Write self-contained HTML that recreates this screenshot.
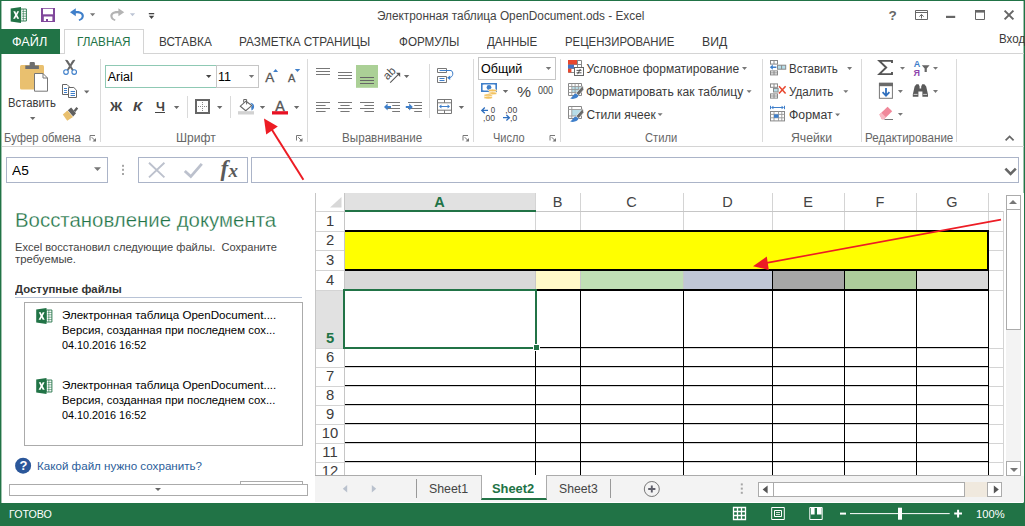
<!DOCTYPE html>
<html lang="ru"><head><meta charset="utf-8"><title>Excel</title>
<style>
html,body{margin:0;padding:0}
body{width:1025px;height:526px;position:relative;overflow:hidden;background:#fff;font-family:"Liberation Sans",sans-serif;font-size:12px;color:#444}
.a{position:absolute}
.t{position:absolute;white-space:nowrap;line-height:1;transform-origin:0 0}
svg{position:absolute;overflow:visible}
.vs{position:absolute;width:1px;background:#dadada}
.dd{position:absolute;width:0;height:0;border-left:3px solid transparent;border-right:3px solid transparent;border-top:3px solid #666}
.rh{position:absolute;left:316px;width:28px;text-align:center;font-size:14.8px;color:#3c3c3c;line-height:1}
</style></head><body>

<div class="a" style="left:0;top:0;width:1025px;height:1px;background:#217346"></div>
<div class="a" style="left:0;top:0;width:1px;height:526px;background:#217346"></div>
<div class="a" style="left:1px;top:1px;width:1px;height:526px;background:#9fc3ae"></div>
<div class="a" style="left:1023px;top:1px;width:1px;height:526px;background:#9fc3ae"></div>
<div class="a" style="left:1024px;top:0;width:1px;height:526px;background:#217346"></div>
<span class="t" style="left:377.4px;top:10.0px;font-size:12.5px;color:#444;transform:scaleX(0.945);">Электронная таблица OpenDocument.ods - Excel</span>
<div class="a" style="left:2px;top:53px;width:1022px;height:1px;background:#d4d4d4"></div>
<div class="a" style="left:0;top:29px;width:60px;height:25px;background:#217346"></div>
<div class="a" style="left:64px;top:29px;width:78px;height:24px;background:#fff;border:1px solid #d4d4d4;border-bottom:none;box-sizing:content-box"></div>
<span class="t" style="left:12.4px;top:36.0px;font-size:12.5px;color:#fff;transform:scaleX(1.014);">ФАЙЛ</span>
<span class="t" style="left:76.7px;top:36.0px;font-size:12.5px;color:#217346;transform:scaleX(0.934);">ГЛАВНАЯ</span>
<span class="t" style="left:158.6px;top:36.0px;font-size:12.5px;color:#3a3a3a;transform:scaleX(0.941);">ВСТАВКА</span>
<span class="t" style="left:239.0px;top:36.0px;font-size:12.5px;color:#3a3a3a;transform:scaleX(0.943);">РАЗМЕТКА СТРАНИЦЫ</span>
<span class="t" style="left:398.9px;top:36.0px;font-size:12.5px;color:#3a3a3a;transform:scaleX(0.934);">ФОРМУЛЫ</span>
<span class="t" style="left:487.4px;top:36.0px;font-size:12.5px;color:#3a3a3a;transform:scaleX(0.926);">ДАННЫЕ</span>
<span class="t" style="left:565.4px;top:36.0px;font-size:12.5px;color:#3a3a3a;transform:scaleX(0.909);">РЕЦЕНЗИРОВАНИЕ</span>
<span class="t" style="left:702.4px;top:36.0px;font-size:12.5px;color:#3a3a3a;transform:scaleX(0.979);">ВИД</span>
<span class="t" style="left:999.1px;top:33.0px;font-size:12.5px;color:#3a3a3a;transform:scaleX(0.925);">Вход</span>
<div class="a" style="left:2px;top:146px;width:1022px;height:1px;background:#d4d4d4"></div>
<div class="vs" style="left:100px;top:59px;height:83px"></div>
<div class="vs" style="left:307px;top:59px;height:83px"></div>
<div class="vs" style="left:473px;top:59px;height:83px"></div>
<div class="vs" style="left:560px;top:59px;height:83px"></div>
<div class="vs" style="left:762px;top:59px;height:83px"></div>
<div class="vs" style="left:861px;top:59px;height:83px"></div>
<div class="vs" style="left:956px;top:59px;height:83px"></div>
<div class="vs" style="left:187px;top:96px;height:22px"></div>
<div class="vs" style="left:230px;top:96px;height:22px"></div>
<div class="vs" style="left:429px;top:64px;height:54px"></div>
<span class="t" style="left:4.4px;top:132.1px;font-size:12px;color:#666;transform:scaleX(0.941);">Буфер обмена</span>
<span class="t" style="left:175.9px;top:132.1px;font-size:12px;color:#666;transform:scaleX(1.005);">Шрифт</span>
<span class="t" style="left:342.4px;top:132.1px;font-size:12px;color:#666;transform:scaleX(0.971);">Выравнивание</span>
<span class="t" style="left:493.4px;top:132.1px;font-size:12px;color:#666;transform:scaleX(0.918);">Число</span>
<span class="t" style="left:645.2px;top:132.1px;font-size:12px;color:#666;transform:scaleX(0.931);">Стили</span>
<span class="t" style="left:791.2px;top:132.1px;font-size:12px;color:#666;transform:scaleX(1.019);">Ячейки</span>
<span class="t" style="left:864.9px;top:132.1px;font-size:12px;color:#666;transform:scaleX(0.966);">Редактирование</span>
<span class="t" style="left:8.2px;top:97.2px;font-size:12px;color:#3a3a3a;transform:scaleX(0.942);">Вставить</span>
<div class="a" style="left:105px;top:65px;width:110px;height:21px;border:1px solid #8fc9b4;background:#fff"></div>
<div class="a" style="left:216px;top:65px;width:41px;height:21px;border:1px solid #c6c6c6;background:#fff"></div>
<span class="t" style="left:107.7px;top:71.0px;font-size:12.5px;color:#000;">Arial</span>
<span class="t" style="left:218.0px;top:71.0px;font-size:12.5px;color:#000;transform:scaleX(1.005);">11</span>
<span class="t" style="left:109.8px;top:100.7px;font-size:12.5px;color:#444;font-weight:bold;transform:scaleX(1.083);">Ж</span>
<span class="t" style="left:133.0px;top:100.7px;font-size:12.5px;color:#444;font-weight:bold;font-style:italic;transform:scaleX(1.177);">К</span>
<span class="t" style="left:155.7px;top:100.7px;font-size:12.5px;color:#444;font-weight:bold;transform:scaleX(1.017);">Ч</span>
<div class="a" style="left:155px;top:112px;width:10px;height:1px;background:#444"></div>
<div class="a" style="left:478px;top:57px;width:76px;height:21px;border:1px solid #c6c6c6;background:#fff"></div>
<span class="t" style="left:481.1px;top:63.0px;font-size:12.5px;color:#000;transform:scaleX(1.005);">Общий</span>
<span class="t" style="left:516.6px;top:84.5px;font-size:14px;color:#444;transform:scaleX(1.124);">%</span>
<span class="t" style="left:537.5px;top:85.8px;font-size:10px;color:#444;transform:scaleX(0.899);">000</span>
<span class="t" style="left:586.4px;top:62.8px;font-size:12px;color:#3a3a3a;">Условное форматирование</span>
<span class="t" style="left:586.4px;top:86.0px;font-size:12px;color:#3a3a3a;transform:scaleX(1.007);">Форматировать как таблицу</span>
<span class="t" style="left:586.4px;top:109.0px;font-size:12px;color:#3a3a3a;">Стили ячеек</span>
<span class="t" style="left:788.6px;top:63.0px;font-size:12px;color:#3a3a3a;transform:scaleX(0.959);">Вставить</span>
<span class="t" style="left:788.6px;top:85.5px;font-size:12px;color:#3a3a3a;transform:scaleX(0.969);">Удалить</span>
<span class="t" style="left:788.6px;top:108.8px;font-size:12px;color:#3a3a3a;transform:scaleX(1.022);">Формат</span>
<div class="a" style="left:6px;top:157px;width:100px;height:24px;border:1px solid #abb4c8;background:#fff"></div>
<span class="t" style="left:12.4px;top:165.0px;font-size:12.5px;color:#000;transform:scaleX(1.095);">A5</span>
<div class="a" style="left:138px;top:157px;width:108px;height:24px;border:1px solid #abb4c8;background:#fff"></div>
<div class="a" style="left:251px;top:157px;width:766px;height:24px;border:1px solid #abb4c8;background:#fff"></div>
<span class="t" style="left:220.5px;top:157.1px;font-size:23px;color:#5a5a5a;font-weight:bold;font-style:italic;font-family:'Liberation Serif',serif;">f</span>
<span class="t" style="left:228.4px;top:161.2px;font-size:19px;color:#5a5a5a;font-weight:bold;font-style:italic;font-family:'Liberation Serif',serif;">x</span>
<span class="t" style="left:14.6px;top:210.1px;font-size:20px;color:#217346;transform:scaleX(1.020);-webkit-text-stroke:0.3px #fff;">Восстановление документа</span>
<span class="t" style="left:15.0px;top:241.9px;font-size:11px;color:#444;transform:scaleX(1.009);">Excel восстановил следующие файлы.&nbsp; Сохраните</span>
<span class="t" style="left:15.0px;top:254.4px;font-size:11px;color:#444;transform:scaleX(1.028);">требуемые.</span>
<span class="t" style="left:15.0px;top:283.5px;font-size:11.5px;color:#333;font-weight:bold;transform:scaleX(0.988);">Доступные файлы</span>
<div class="a" style="left:15px;top:297px;width:287px;height:1px;background:#b8c3d6"></div>
<div class="a" style="left:24px;top:302px;width:277px;height:142px;border:1px solid #ababab;background:#fff"></div>
<span class="t" style="left:61.9px;top:310.1px;font-size:11px;color:#000;transform:scaleX(1.052);">Электронная таблица OpenDocument....</span>
<span class="t" style="left:61.9px;top:325.1px;font-size:11px;color:#000;transform:scaleX(1.035);">Версия, созданная при последнем сох...</span>
<span class="t" style="left:61.9px;top:340.1px;font-size:11px;color:#000;transform:scaleX(0.983);">04.10.2016 16:52</span>
<span class="t" style="left:61.9px;top:380.1px;font-size:11px;color:#000;transform:scaleX(1.052);">Электронная таблица OpenDocument....</span>
<span class="t" style="left:61.9px;top:395.1px;font-size:11px;color:#000;transform:scaleX(1.035);">Версия, созданная при последнем сох...</span>
<span class="t" style="left:61.9px;top:410.1px;font-size:11px;color:#000;transform:scaleX(0.983);">04.10.2016 16:52</span>
<span class="t" style="left:36.9px;top:460.8px;font-size:11.5px;color:#2a5d9a;transform:scaleX(1.010);">Какой файл нужно сохранить?</span>
<div class="a" style="left:315px;top:193px;width:1px;height:283px;background:#c6c6c6"></div>
<div class="a" style="left:345px;top:211px;width:658px;height:1px;background:#d4d4d4"></div>
<div class="a" style="left:345px;top:231px;width:658px;height:1px;background:#d4d4d4"></div>
<div class="a" style="left:345px;top:250px;width:658px;height:1px;background:#d4d4d4"></div>
<div class="a" style="left:345px;top:270px;width:658px;height:1px;background:#d4d4d4"></div>
<div class="a" style="left:345px;top:290px;width:658px;height:1px;background:#d4d4d4"></div>
<div class="a" style="left:345px;top:348px;width:658px;height:1px;background:#d4d4d4"></div>
<div class="a" style="left:345px;top:367px;width:658px;height:1px;background:#d4d4d4"></div>
<div class="a" style="left:345px;top:386px;width:658px;height:1px;background:#d4d4d4"></div>
<div class="a" style="left:345px;top:405px;width:658px;height:1px;background:#d4d4d4"></div>
<div class="a" style="left:345px;top:424px;width:658px;height:1px;background:#d4d4d4"></div>
<div class="a" style="left:345px;top:443px;width:658px;height:1px;background:#d4d4d4"></div>
<div class="a" style="left:345px;top:462px;width:658px;height:1px;background:#d4d4d4"></div>
<div class="a" style="left:535px;top:193px;width:1px;height:283px;background:#d4d4d4"></div>
<div class="a" style="left:580px;top:193px;width:1px;height:283px;background:#d4d4d4"></div>
<div class="a" style="left:683px;top:193px;width:1px;height:283px;background:#d4d4d4"></div>
<div class="a" style="left:772px;top:193px;width:1px;height:283px;background:#d4d4d4"></div>
<div class="a" style="left:844px;top:193px;width:1px;height:283px;background:#d4d4d4"></div>
<div class="a" style="left:916px;top:193px;width:1px;height:283px;background:#d4d4d4"></div>
<div class="a" style="left:988px;top:193px;width:1px;height:283px;background:#d4d4d4"></div>
<div class="a" style="left:1003px;top:211px;width:1px;height:265px;background:#d4d4d4"></div>
<div class="a" style="left:345px;top:193px;width:190px;height:17px;background:#e1e1e1"></div>
<div class="a" style="left:344px;top:211px;width:659px;height:1px;background:#c6c6c6"></div>
<div class="a" style="left:344px;top:210px;width:192px;height:2px;background:#217346"></div>
<svg style="left:330px;top:197px" width="12" height="11"><path d="M11.5 0V10.5H0Z" fill="#d8d8d8"/></svg>
<div class="a" style="left:419.5px;top:195.3px;width:40px;text-align:center;font-size:14.5px;line-height:1;color:#217346;font-weight:bold;">A</div>
<div class="a" style="left:537.5px;top:195.3px;width:40px;text-align:center;font-size:14.5px;line-height:1;color:#444;">B</div>
<div class="a" style="left:611.5px;top:195.3px;width:40px;text-align:center;font-size:14.5px;line-height:1;color:#444;">C</div>
<div class="a" style="left:707.5px;top:195.3px;width:40px;text-align:center;font-size:14.5px;line-height:1;color:#444;">D</div>
<div class="a" style="left:788px;top:195.3px;width:40px;text-align:center;font-size:14.5px;line-height:1;color:#444;">E</div>
<div class="a" style="left:860px;top:195.3px;width:40px;text-align:center;font-size:14.5px;line-height:1;color:#444;">F</div>
<div class="a" style="left:932px;top:195.3px;width:40px;text-align:center;font-size:14.5px;line-height:1;color:#444;">G</div>
<div class="a" style="left:316px;top:290px;width:28px;height:58px;background:#e1e1e1"></div>
<div class="a" style="left:344px;top:193px;width:1px;height:283px;background:#c6c6c6"></div>
<div class="a" style="left:316px;top:211px;width:28px;height:1px;background:#d4d4d4"></div>
<div class="a" style="left:316px;top:231px;width:28px;height:1px;background:#d4d4d4"></div>
<div class="a" style="left:316px;top:250px;width:28px;height:1px;background:#d4d4d4"></div>
<div class="a" style="left:316px;top:270px;width:28px;height:1px;background:#d4d4d4"></div>
<div class="a" style="left:316px;top:290px;width:28px;height:1px;background:#d4d4d4"></div>
<div class="a" style="left:316px;top:348px;width:28px;height:1px;background:#d4d4d4"></div>
<div class="a" style="left:316px;top:367px;width:28px;height:1px;background:#d4d4d4"></div>
<div class="a" style="left:316px;top:386px;width:28px;height:1px;background:#d4d4d4"></div>
<div class="a" style="left:316px;top:405px;width:28px;height:1px;background:#d4d4d4"></div>
<div class="a" style="left:316px;top:424px;width:28px;height:1px;background:#d4d4d4"></div>
<div class="a" style="left:316px;top:443px;width:28px;height:1px;background:#d4d4d4"></div>
<div class="a" style="left:316px;top:462px;width:28px;height:1px;background:#d4d4d4"></div>
<div class="rh" style="top:214px">1</div>
<div class="rh" style="top:233px">2</div>
<div class="rh" style="top:253px">3</div>
<div class="rh" style="top:273px">4</div>
<div class="rh" style="top:330.7px;color:#217346;font-weight:bold">5</div>
<div class="rh" style="top:350px">6</div>
<div class="rh" style="top:369px">7</div>
<div class="rh" style="top:388px">8</div>
<div class="rh" style="top:407px">9</div>
<div class="rh" style="top:426px">10</div>
<div class="rh" style="top:445px">11</div>
<div class="rh" style="top:464px">12</div>
<div class="a" style="left:345px;top:231px;width:643px;height:39px;background:#ffff00"></div>
<div class="a" style="left:345px;top:230px;width:644px;height:2px;background:#000"></div>
<div class="a" style="left:345px;top:269px;width:644px;height:2px;background:#000"></div>
<div class="a" style="left:987px;top:230px;width:2px;height:61px;background:#000"></div>
<div class="a" style="left:345px;top:271px;width:190px;height:18px;background:#d9d9d9"></div>
<div class="a" style="left:536px;top:271px;width:44px;height:18px;background:#fffac8"></div>
<div class="a" style="left:535px;top:271px;width:1px;height:18px;background:#c8c8c8"></div>
<div class="a" style="left:581px;top:271px;width:102px;height:18px;background:#c0dfb5"></div>
<div class="a" style="left:580px;top:271px;width:1px;height:18px;background:#c8c8c8"></div>
<div class="a" style="left:684px;top:271px;width:88px;height:18px;background:#c0c7d6"></div>
<div class="a" style="left:683px;top:271px;width:1px;height:18px;background:#c8c8c8"></div>
<div class="a" style="left:773px;top:271px;width:71px;height:18px;background:#a6a6a6"></div>
<div class="a" style="left:772px;top:271px;width:1px;height:18px;background:#000"></div>
<div class="a" style="left:845px;top:271px;width:71px;height:18px;background:#accc9b"></div>
<div class="a" style="left:844px;top:271px;width:1px;height:18px;background:#000"></div>
<div class="a" style="left:917px;top:271px;width:71px;height:18px;background:#d9d9d9"></div>
<div class="a" style="left:916px;top:271px;width:1px;height:18px;background:#000"></div>
<div class="a" style="left:345px;top:289px;width:644px;height:2px;background:#000"></div>
<div class="a" style="left:535px;top:290px;width:1px;height:186px;background:#000"></div>
<div class="a" style="left:580px;top:290px;width:1px;height:186px;background:#000"></div>
<div class="a" style="left:683px;top:290px;width:1px;height:186px;background:#000"></div>
<div class="a" style="left:772px;top:290px;width:1px;height:186px;background:#000"></div>
<div class="a" style="left:844px;top:290px;width:1px;height:186px;background:#000"></div>
<div class="a" style="left:916px;top:290px;width:1px;height:186px;background:#000"></div>
<div class="a" style="left:988px;top:290px;width:1px;height:186px;background:#000"></div>
<div class="a" style="left:345px;top:347px;width:643px;height:1px;background:#000"></div>
<div class="a" style="left:345px;top:366px;width:643px;height:1px;background:#000"></div>
<div class="a" style="left:345px;top:385px;width:643px;height:1px;background:#000"></div>
<div class="a" style="left:345px;top:404px;width:643px;height:1px;background:#000"></div>
<div class="a" style="left:345px;top:423px;width:643px;height:1px;background:#000"></div>
<div class="a" style="left:345px;top:442px;width:643px;height:1px;background:#000"></div>
<div class="a" style="left:345px;top:461px;width:643px;height:1px;background:#000"></div>
<div class="a" style="left:343px;top:289px;width:190px;height:56px;border:2px solid #217346;background:#fff"></div>
<div class="a" style="left:533px;top:344px;width:5px;height:5px;background:#217346;border:1px solid #fff"></div>
<div class="a" style="left:1004px;top:193px;width:20px;height:283px;background:#fff"></div>
<div class="a" style="left:1006px;top:195px;width:15px;height:281px;background:#f3f3f3"></div>
<div class="a" style="left:1006px;top:195px;width:13px;height:13px;border:1px solid #ababab;background:#fff"></div>
<div class="a" style="left:1006px;top:209px;width:13px;height:119px;border:1px solid #ababab;background:#fff"></div>
<div class="a" style="left:1006px;top:461px;width:13px;height:13px;border:1px solid #ababab;background:#fff"></div>
<div class="a" style="left:1009px;top:200px;width:0;height:0;border-left:4.4px solid transparent;border-right:4.4px solid transparent;border-bottom:4.4px solid #777"></div>
<div class="a" style="left:1009.5px;top:467.5px;width:0;height:0;border-left:4px solid transparent;border-right:4px solid transparent;border-top:4px solid #777"></div>
<div class="a" style="left:315px;top:476px;width:709px;height:26px;background:#f3f3f3"></div>
<div class="a" style="left:315px;top:475px;width:688px;height:1px;background:#ababab"></div>
<div class="a" style="left:481px;top:475px;width:64px;height:23px;background:#fff;border-left:1px solid #ababab;border-right:1px solid #ababab;border-bottom:2px solid #217346"></div>
<div class="a" style="left:416px;top:479px;width:1px;height:19px;background:#999"></div>
<div class="a" style="left:610px;top:479px;width:1px;height:19px;background:#999"></div>
<div class="a" style="left:758px;top:482px;width:244px;height:15px;background:#f0e9de"></div>
<div class="a" style="left:758px;top:482px;width:14px;height:13px;border:1px solid #ababab;background:#fff"></div>
<div class="a" style="left:773px;top:482px;width:190px;height:13px;border:1px solid #ababab;background:#fff"></div>
<div class="a" style="left:987px;top:482px;width:13px;height:13px;border:1px solid #ababab;background:#fff"></div>
<div class="a" style="left:240px;top:481px;width:61px;height:10px;border:1px solid #ababab;background:#fff"></div>
<div class="a" style="left:9px;top:484px;width:297px;height:10px;border:1px solid #ababab;background:#fff"></div>
<div class="a" style="left:155.2px;top:487.8px;width:0;height:0;border-left:3.6px solid transparent;border-right:3.6px solid transparent;border-top:3.8px solid #666"></div>
<span class="t" style="left:429.4px;top:482.8px;font-size:12px;color:#444;transform:scaleX(1.030);">Sheet1</span>
<span class="t" style="left:492.4px;top:482.8px;font-size:12px;color:#217346;font-weight:bold;transform:scaleX(1.072);">Sheet2</span>
<span class="t" style="left:558.9px;top:482.8px;font-size:12px;color:#444;transform:scaleX(1.017);">Sheet3</span>
<div class="a" style="left:0;top:503px;width:1025px;height:23px;background:#217346"></div>
<span class="t" style="left:8.6px;top:508.8px;font-size:11.5px;color:#fff;transform:scaleX(0.929);">ГОТОВО</span>
<span class="t" style="left:975.5px;top:508.8px;font-size:11px;color:#fff;transform:scaleX(1.016);">100%</span>
<svg width="1025" height="526" viewBox="0 0 1025 526" style="left:0;top:0;pointer-events:none">
<g transform="translate(10.7 7) scale(1)">
<path d="M10 2H15.7V14H10Z" fill="#fff" stroke="#217346" stroke-width="0.9"/>
<path d="M11.4 4.4H15.6M11.4 6.8H15.6M11.4 9.2H15.6M11.4 11.6H15.6M12.6 2V14" stroke="#217346" stroke-width="0.6" fill="none"/>
<path d="M0 1.6L10.3 0V16L0 14.4Z" fill="#217346"/>
<path d="M2.6 4.3H4.6L5.5 6.6L6.5 4.3H8.4L6.5 8L8.5 11.8H6.5L5.4 9.4L4.4 11.8H2.4L4.4 8Z" fill="#fff"/>
</g>
<path d="M41 8H55V22H41Z" fill="#80479b"/>
<path d="M43 8.8H53V14.3H43Z" fill="#fff"/>
<path d="M43.8 16.6H52.4V21H48V19H46V21H43.8Z" fill="#fff"/>
<path d="M70 12.2L75.8 8.2V10.9C81.5 10.6 84.3 13.3 83.8 16.6C83.4 19 81.5 20.5 79.3 21L78.6 19.5C80.4 18.9 81.6 17.8 81.7 16.2C81.8 14.2 79.8 13.1 75.8 13.4V16.3Z" fill="#3f7fca"/>
<path d="M90 13.2H95.2L92.6 16.2Z" fill="#777"/>
<path d="M124.2 12.2L118.4 8.2V10.9C112.7 10.6 109.9 13.3 110.4 16.6C110.8 19 112.7 20.5 114.9 21L115.6 19.5C113.8 18.9 112.6 17.8 112.5 16.2C112.4 14.2 114.4 13.1 118.4 13.4V16.3Z" fill="#b4b4b4"/>
<path d="M129.9 13.2H135.1L132.5 16.2Z" fill="#bcc4d4"/>
<path d="M148.8 13H154.2V14.3H148.8Z" fill="#444"/><path d="M148.8 15.8H154.2L151.5 19Z" fill="#444"/>
<path d="M915.5 10.5H927.5V19.5H915.5Z" fill="none" stroke="#666" stroke-width="1"/><path d="M915.5 12.5H927.5" stroke="#666" stroke-width="1"/>
<path d="M921.5 18.5V14.6M919.4 16.6L921.5 14.4L923.6 16.6" fill="none" stroke="#666" stroke-width="1"/>
<path d="M946 15.8H955.2V18H946Z" fill="#666"/>
<path d="M975.5 10.5H984.5V19.5H975.5Z" fill="none" stroke="#666" stroke-width="1"/><path d="M975 10H985V12.6H975Z" fill="#666"/>
<path d="M1004.6 10.6L1013.4 19.4M1013.4 10.6L1004.6 19.4" stroke="#666" stroke-width="2" fill="none"/>
<text x="888.4" y="20" font-family="Liberation Sans, sans-serif" font-weight="bold" font-size="13.5" fill="#666">?</text>
<rect x="20" y="65" width="24" height="24.6" rx="1.5" fill="#e9c06f"/>
<path d="M29.6 65.6V63.2Q29.6 62 30.8 62H33.7Q34.9 62 34.9 63.2V65.6H38.9V69H25.3V65.6Z" fill="#6e6e6e"/>
<path d="M34.5 73.5H43L47.5 78V91.2H34.5Z" fill="#fff" stroke="#777" stroke-width="1"/>
<path d="M43 73.5V78H47.5" fill="none" stroke="#777" stroke-width="1"/>
<path d="M30 117H35.4L32.7 120Z" fill="#6a6a6a"/>
<path d="M65.6 60.2L67.6 60.6L73.4 70.2L72.4 70.6ZM74.8 60.2L72.8 60.6L67 70.2L68 70.6Z" fill="#5f5f5f" stroke="#5f5f5f" stroke-width="0.8"/>
<circle cx="66" cy="72.1" r="2.3" fill="#fff" stroke="#3f7fca" stroke-width="1.1"/><circle cx="74.2" cy="72.1" r="2.3" fill="#fff" stroke="#3f7fca" stroke-width="1.1"/>
<path d="M62.5 84.5H67L69.5 87V94.5H62.5Z" fill="#fff" stroke="#666"/>
<path d="M64 88.5H67M64 90.5H67M64 92.5H67" stroke="#3f7fca" stroke-width="1"/>
<path d="M68.5 87.5H73.8L76.5 90.2V97.5H68.5Z" fill="#fff" stroke="#666"/>
<path d="M70.6 91.5H75M70.6 93.5H75M70.6 95.5H75" stroke="#3f7fca" stroke-width="1"/>
<path d="M84 90.4H89.4L86.7 93.4Z" fill="#6a6a6a"/>
<path d="M62.8 114.6L67.4 110.6L73 117L67.2 120.8Z" fill="#e9c06f"/>
<path d="M67.8 110.2L71.2 107.6L76 113.2L73.2 116.4Z" fill="#5f5f5f"/>
<path d="M73.6 110.4L76.4 107L78.2 108.6L75.4 112Z" fill="#5f5f5f"/>
<path d="M206 75H211.4L208.7 78Z" fill="#444"/>
<path d="M248.8 75H254.2L251.5 78Z" fill="#777"/>
<path d="M173.9 106H179.3L176.6 109Z" fill="#6a6a6a"/>
<path d="M217 106H222.4L219.7 109Z" fill="#6a6a6a"/>
<path d="M259.8 106H265.2L262.5 109Z" fill="#6a6a6a"/>
<path d="M293.9 106H299.3L296.6 109Z" fill="#6a6a6a"/>
<text x="265.2" y="81.5" font-family="Liberation Sans, sans-serif" font-size="13.5" fill="#555" stroke="#555" stroke-width="0.3">A</text>
<path d="M273.1 72L275.6 68.9L278.1 72Z" fill="#3f7fca"/>
<text x="287.9" y="81.5" font-family="Liberation Sans, sans-serif" font-size="11" fill="#555" stroke="#555" stroke-width="0.3">A</text>
<path d="M294.8 68.9H300.2L297.5 72Z" fill="#3f7fca"/>
<rect x="196" y="100" width="13" height="13" fill="#fff" stroke="#666" stroke-width="2"/>
<path d="M202.5 102V111M198 106.5H207" stroke="#888" stroke-width="1" stroke-dasharray="1 1"/>
<path d="M246 101.2L251.8 105.6L245.7 110.7L240.3 106.2Z" fill="#fff" stroke="#666" stroke-width="1.1"/>
<path d="M243.7 102.6V99.5H246.6V104.4" fill="none" stroke="#666" stroke-width="1"/>
<path d="M250.2 102.8C253 103 254.6 105 254 107.4C253.7 108.8 252.8 109.9 251.5 110.4L251.2 107L252.6 105.6Z" fill="#3f7fca"/>
<rect x="238" y="111.2" width="16" height="3.3" fill="#d2d2d2"/>
<text x="275.3" y="111.2" font-family="Liberation Sans, sans-serif" font-size="14.2" fill="#555" stroke="#555" stroke-width="0.35">A</text>
<rect x="272" y="111.2" width="16" height="3.3" fill="#e81123"/>
<rect x="316" y="68" width="14" height="1" fill="#777"/>
<rect x="316" y="71" width="14" height="1" fill="#777"/>
<rect x="316" y="74" width="14" height="1" fill="#777"/>
<rect x="338" y="72" width="14" height="1" fill="#777"/>
<rect x="338" y="75" width="14" height="1" fill="#777"/>
<rect x="338" y="78" width="14" height="1" fill="#777"/>
<rect x="356" y="65" width="22" height="22.8" fill="#abd096"/>
<rect x="360" y="77" width="14" height="1" fill="#666"/>
<rect x="360" y="80" width="14" height="1" fill="#666"/>
<rect x="360" y="83" width="14" height="1" fill="#666"/>
<text transform="translate(387.4 80.4) rotate(-45)" font-family="Liberation Sans, sans-serif" font-size="11.5" fill="#4a4a4a">ab</text>
<path d="M390.2 82.6L399.2 73.6" stroke="#555" stroke-width="1.1"/><path d="M396 72.8H400.2V77Z" fill="#555"/>
<path d="M403.9 75.1H409.3L406.6 78.1Z" fill="#6a6a6a"/>
<rect x="316" y="102" width="14" height="1" fill="#777"/>
<rect x="338" y="102" width="14" height="1" fill="#777"/>
<rect x="360" y="102" width="14" height="1" fill="#777"/>
<rect x="386" y="102" width="14" height="1" fill="#777"/>
<rect x="408" y="102" width="14" height="1" fill="#777"/>
<rect x="316" y="105" width="9.6" height="1" fill="#777"/>
<rect x="340.4" y="105" width="9.2" height="1" fill="#777"/>
<rect x="364.4" y="105" width="9.6" height="1" fill="#777"/>
<rect x="392.2" y="105" width="7.8" height="1" fill="#777"/>
<rect x="414.2" y="105" width="7.8" height="1" fill="#777"/>
<rect x="316" y="108" width="14" height="1" fill="#777"/>
<rect x="338" y="108" width="14" height="1" fill="#777"/>
<rect x="360" y="108" width="14" height="1" fill="#777"/>
<rect x="386" y="108" width="14" height="1" fill="#777"/>
<rect x="408" y="108" width="14" height="1" fill="#777"/>
<rect x="316" y="111" width="9.6" height="1" fill="#777"/>
<rect x="340.4" y="111" width="9.2" height="1" fill="#777"/>
<rect x="364.4" y="111" width="9.6" height="1" fill="#777"/>
<rect x="392.2" y="111" width="7.8" height="1" fill="#777"/>
<rect x="414.2" y="111" width="7.8" height="1" fill="#777"/>
<path d="M384 107L387.6 103.6V105.9H391V108.1H387.6V110.4Z" fill="#3f7fca"/>
<path d="M412.8 107L409.2 103.6V105.9H405.8V108.1H409.2V110.4Z" fill="#3f7fca"/>
<path d="M437.5 68.5H446.5V72.5H437.5Z" fill="#fff" stroke="#777"/><path d="M437.5 76.5H446.5V82.5H437.5Z" fill="#fff" stroke="#777"/>
<path d="M439.5 70.5H451.2M439.5 78.5H444.5M439.5 80.5H444.5" stroke="#3f7fca" stroke-width="1"/>
<path d="M451 70.5C453.6 71.5 453.6 77 449.6 77.6" fill="none" stroke="#3f7fca" stroke-width="1"/><path d="M447 77.8L450.2 75.4V80Z" fill="#3f7fca"/>
<path d="M437.5 99.5H451.5V113.5H437.5Z" fill="#fff" stroke="#777"/><path d="M437.5 102.8H451.5M437.5 110.2H451.5M444.5 99.5V102.8M444.5 110.2V113.5" stroke="#777" fill="none"/>
<path d="M440 106.5H449" stroke="#3f7fca" stroke-width="1"/><path d="M439 106.5L441.4 104.6V108.4ZM450 106.5L447.6 104.6V108.4Z" fill="#3f7fca"/>
<path d="M458.7 106.1H464.1L461.4 109.1Z" fill="#6a6a6a"/>
<path d="M545.8 67.1H551.2L548.5 70.1Z" fill="#777"/>
<path d="M502.8 89.9H508.2L505.5 92.9Z" fill="#6a6a6a"/>
<rect x="481" y="83" width="16" height="9" fill="#3f7fca"/><rect x="482.6" y="84.5" width="12.8" height="6" fill="#fff"/><circle cx="489" cy="87.5" r="2.4" fill="#3f7fca"/>
<path d="M481 83H483.4V84.6H481ZM494.6 83H497V84.6H494.6ZM481 90.4H483.4V92H481Z" fill="#3f7fca"/>
<ellipse cx="492.6" cy="90.5" rx="4.2" ry="1.5" fill="#f2c25f" stroke="#fff" stroke-width="0.6"/>
<ellipse cx="492.6" cy="93.3" rx="4.2" ry="1.5" fill="#f2c25f" stroke="#fff" stroke-width="0.6"/>
<ellipse cx="488.2" cy="95.2" rx="4.2" ry="1.5" fill="#f2c25f" stroke="#fff" stroke-width="0.6"/>
<ellipse cx="488.2" cy="97.6" rx="4.2" ry="1.5" fill="#f2c25f" stroke="#fff" stroke-width="0.6"/>
<text x="490.7" y="113.4" textLength="4.4" font-family="Liberation Sans, sans-serif" font-size="9" fill="#444" lengthAdjust="spacingAndGlyphs">0</text><text x="483" y="120.9" textLength="12" font-family="Liberation Sans, sans-serif" font-size="9" fill="#444" lengthAdjust="spacingAndGlyphs">,00</text>
<path d="M488 110.4H482M484.8 107.6L481.8 110.4L484.8 113.2" fill="none" stroke="#2f6fbe" stroke-width="1.3"/>
<text x="505.2" y="113.4" textLength="12" font-family="Liberation Sans, sans-serif" font-size="9" fill="#444" lengthAdjust="spacingAndGlyphs">,00</text><text x="509.9" y="120.9" textLength="7.4" font-family="Liberation Sans, sans-serif" font-size="9" fill="#444" lengthAdjust="spacingAndGlyphs">,0</text>
<path d="M503 117.7H509.2M506.4 114.9L509.4 117.7L506.4 120.5" fill="none" stroke="#2f6fbe" stroke-width="1.3"/>
<path d="M568.5 60.5H581.5V72.5H568.5Z" fill="#fff" stroke="#888"/><path d="M568.5 64.5H581.5M568.5 68.5H581.5M577.5 60.5V72.5" stroke="#888" fill="none"/>
<rect x="568" y="60" width="9" height="4.5" fill="#e8472e"/><rect x="568" y="64.8" width="6" height="3.6" fill="#4472c4"/><rect x="568" y="68.8" width="3.4" height="3.6" fill="#e8472e"/>
<rect x="574.5" y="67.5" width="9" height="8" fill="#fff" stroke="#666"/><path d="M576.5 70.4H581.5M576.5 72.8H581.5M580.4 69L577.6 74.2" stroke="#444" stroke-width="0.9"/>
<path d="M568.5 83.5H581.5V95.5H568.5Z" fill="#fff" stroke="#888"/>
<rect x="572" y="87" width="9" height="5.5" fill="#b7dde8"/>
<path d="M568.5 86.5H581.5M568.5 89.5H581.5M568.5 92.5H581.5M571.8 83.5V95.5M575.1 83.5V95.5M578.4 83.5V95.5" stroke="#999" fill="none" stroke-width="0.9"/>
<path d="M582.8 85.6L583.8 89.5L578.8 95.4L576 93.2Z" fill="#6a6a6a" stroke="#fff" stroke-width="0.6"/>
<path d="M575.8 93.4C573.2 94 572.6 97 570.2 98.6C573.8 99.4 577.6 98.6 578.6 95.6Z" fill="#3f7fca"/>
<path d="M568.5 106.5H581.5V118.5H568.5Z" fill="#fff" stroke="#888"/>
<rect x="571.8" y="110" width="9.7" height="6" fill="#b7dde8"/>
<path d="M568.5 109.5H581.5M568.5 116H581.5M571.8 106.5V118.5" stroke="#999" fill="none" stroke-width="0.9"/>
<path d="M582.8 108.6L583.8 112.5L578.8 118.4L576 116.2Z" fill="#6a6a6a" stroke="#fff" stroke-width="0.6"/>
<path d="M575.8 116.4C573.2 117 572.6 120 570.2 121.6C573.8 122.4 577.6 121.6 578.6 118.6Z" fill="#3f7fca"/>
<path d="M742 67.1H747L744.5 69.9Z" fill="#777"/>
<path d="M746.6 90.2H751.6L749.1 93Z" fill="#777"/>
<path d="M657.6 113.3H662.6L660.1 116.1Z" fill="#777"/>
<rect x="770.5" y="60.5" width="7" height="3.6" fill="#fff" stroke="#888"/>
<path d="M774 60.5V64" stroke="#888"/>
<rect x="777.5" y="65.2" width="8.2" height="4" fill="#b7dde8" stroke="#888"/><path d="M781.6 65.2V69.2" stroke="#888"/>
<path d="M769.8 67.2L772.8 64.6V66.5H776.4V67.9H772.8V69.8Z" fill="#3f7fca"/>
<rect x="770.5" y="70.9" width="7" height="4" fill="#fff" stroke="#888"/>
<path d="M774 70.9V75M770.5 72.9H777.5" stroke="#888"/>
<rect x="770.5" y="83.9" width="7" height="3.4" fill="#fff" stroke="#888"/>
<path d="M774 83.9V87.4" stroke="#888"/>
<rect x="773.5" y="88.4" width="4.6" height="3.6" fill="#b7dde8" stroke="#888"/>
<rect x="770.5" y="93.9" width="7" height="4.2" fill="#fff" stroke="#888"/>
<path d="M774 93.9V98.2M770.5 96H777.5" stroke="#888"/>
<path d="M779 86.2L785.6 93.6M785.6 86.2L779 93.6" stroke="#e8472e" stroke-width="1.5"/>
<path d="M770.5 105.8V109.2M784.5 105.8V109.2M772 107.5H783" stroke="#3f7fca" stroke-width="1"/><path d="M771 107.5L773.4 105.8V109.2ZM784 107.5L781.6 105.8V109.2Z" fill="#3f7fca"/>
<rect x="770.5" y="111.5" width="14" height="9.4" fill="#fff" stroke="#888"/>
<path d="M770.5 114.4H784.5M770.5 117.8H784.5M774 111.5V121M778.5 111.5V121M781.8 111.5V121" stroke="#999" stroke-width="0.9"/>
<rect x="774" y="114.4" width="4.5" height="3.4" fill="#3f7fca"/>
<path d="M847.1 67.1H852.1L849.6 69.9Z" fill="#777"/>
<path d="M843.3 90.2H848.3L845.8 93Z" fill="#777"/>
<path d="M835.1 113.4H840.1L837.6 116.2Z" fill="#777"/>
<path d="M892 63V60.9H879.4L886.2 67.5L879.4 74.1H892V72" fill="none" stroke="#555" stroke-width="1.9" stroke-linejoin="miter"/>
<path d="M900 66.9H905L902.5 69.7Z" fill="#777"/>
<path d="M933 66.9H938L935.5 69.7Z" fill="#777"/>
<text x="913.8" y="66.7" font-family="Liberation Sans, sans-serif" font-weight="bold" font-size="9" fill="#3f7fca">A</text>
<text x="913.6" y="75.8" font-family="Liberation Sans, sans-serif" font-weight="bold" font-size="9" fill="#8e44ad">Я</text>
<path d="M921.8 65.3H929.6L926.8 68.4V72H924.6V68.4Z" fill="#666"/>
<rect x="879.4" y="83.3" width="13" height="15" fill="#fff" stroke="#777"/><rect x="879" y="82.8" width="14" height="3.4" fill="#6a6a6a"/>
<path d="M886 88V95M882.6 92.2L886 95.8L889.4 92.2" fill="none" stroke="#2f6fbe" stroke-width="1.8"/>
<path d="M897.9 90.1H902.9L900.4 92.9Z" fill="#777"/>
<path d="M933 90.1H938L935.5 92.9Z" fill="#777"/>
<path d="M914.6 86.6L916.4 84.2H918.6L919.6 86.6V88.6H921.2V86.6L922.2 84.2H924.4L926.2 86.6L928 94.6V96.8H922.4V91.4H918.4V96.8H912.8V94.6Z" fill="#5a5a5a"/>
<path d="M913.6 94.4H917.6M923.2 94.4H927.2" stroke="#fff" stroke-width="0.7"/>
<path d="M879.4 114.6L887.6 106.8L892.2 111.2L884 119.2H881.8Z" fill="#f0889a"/><path d="M879.4 114.6L881.4 112.7L886 117.2L884 119.2H881.8Z" fill="#f8b9c3"/>
<rect x="884.5" y="119" width="8.5" height="0.9" fill="#666"/>
<path d="M897.9 113H902.9L900.4 115.8Z" fill="#777"/>
<path d="M90 140.5V135.5H95" fill="none" stroke="#777" stroke-width="1"/>
<path d="M91.7 137.2L95.1 140.6" stroke="#777" stroke-width="1"/><path d="M96 138V141.5H92.5Z" fill="#777"/>
<path d="M296.5 140.5V135.5H301.5" fill="none" stroke="#777" stroke-width="1"/>
<path d="M298.2 137.2L301.6 140.6" stroke="#777" stroke-width="1"/><path d="M302.5 138V141.5H299Z" fill="#777"/>
<path d="M463 140.5V135.5H468" fill="none" stroke="#777" stroke-width="1"/>
<path d="M464.7 137.2L468.1 140.6" stroke="#777" stroke-width="1"/><path d="M469 138V141.5H465.5Z" fill="#777"/>
<path d="M550 140.5V135.5H555" fill="none" stroke="#777" stroke-width="1"/>
<path d="M551.7 137.2L555.1 140.6" stroke="#777" stroke-width="1"/><path d="M556 138V141.5H552.5Z" fill="#777"/>
<path d="M1005.6 140.4L1009.6 136.4L1013.6 140.4" fill="none" stroke="#666" stroke-width="1.7"/>
<path d="M94 167.2H101L97.5 171Z" fill="#777"/>
<rect x="122" y="164.8" width="2" height="2" fill="#a6a6a6"/>
<rect x="122" y="168.8" width="2" height="2" fill="#a6a6a6"/>
<rect x="122" y="173" width="2" height="2" fill="#a6a6a6"/>
<path d="M149 162.8L164.4 177.4M164.4 162.8L149 177.4" stroke="#bcc1cd" stroke-width="1.9" fill="none"/>
<path d="M184.8 171L190.8 176.6L201.8 163.8" stroke="#bcc1cd" stroke-width="2.8" fill="none"/>
<path d="M1005.4 168.6L1010.6 173.8L1015.8 168.6" fill="none" stroke="#666" stroke-width="2.6"/>
<g transform="translate(36.2 308) scale(1)">
<path d="M10 2H15.7V14H10Z" fill="#fff" stroke="#217346" stroke-width="0.9"/>
<path d="M11.4 4.4H15.6M11.4 6.8H15.6M11.4 9.2H15.6M11.4 11.6H15.6M12.6 2V14" stroke="#217346" stroke-width="0.6" fill="none"/>
<path d="M0 1.6L10.3 0V16L0 14.4Z" fill="#217346"/>
<path d="M2.6 4.3H4.6L5.5 6.6L6.5 4.3H8.4L6.5 8L8.5 11.8H6.5L5.4 9.4L4.4 11.8H2.4L4.4 8Z" fill="#fff"/>
</g>
<g transform="translate(36.2 378) scale(1)">
<path d="M10 2H15.7V14H10Z" fill="#fff" stroke="#217346" stroke-width="0.9"/>
<path d="M11.4 4.4H15.6M11.4 6.8H15.6M11.4 9.2H15.6M11.4 11.6H15.6M12.6 2V14" stroke="#217346" stroke-width="0.6" fill="none"/>
<path d="M0 1.6L10.3 0V16L0 14.4Z" fill="#217346"/>
<path d="M2.6 4.3H4.6L5.5 6.6L6.5 4.3H8.4L6.5 8L8.5 11.8H6.5L5.4 9.4L4.4 11.8H2.4L4.4 8Z" fill="#fff"/>
</g>
<circle cx="23.1" cy="465.7" r="8" fill="#2b579a"/>
<text x="19.6" y="470.4" font-family="Liberation Sans, sans-serif" font-weight="bold" font-size="13" fill="#fff">?</text>
<path d="M347.2 485V492.4L342.8 488.7Z" fill="#b9c1cd"/><path d="M371.8 485V492.4L376.2 488.7Z" fill="#b9c1cd"/>
<circle cx="651.8" cy="489" r="7.5" fill="none" stroke="#777" stroke-width="1"/><path d="M648.2 489H655.4M651.8 485.4V492.6" stroke="#5f5f6a" stroke-width="1.9"/>
<rect x="740.8" y="483.4" width="2" height="2" fill="#a6a6a6"/>
<rect x="740.8" y="487.6" width="2" height="2" fill="#a6a6a6"/>
<rect x="740.8" y="491.8" width="2" height="2" fill="#a6a6a6"/>
<path d="M767.6 485.4V493.4L762.6 489.4Z" fill="#555"/><path d="M993.8 485.4V493.4L998.8 489.4Z" fill="#555"/>
<path d="M733.5 507.5H745.5V519.5H733.5ZM737.5 507.5V519.5M741.5 507.5V519.5M733.5 511.5H745.5M733.5 515.5H745.5" fill="none" stroke="#fff" stroke-width="1.3"/>
<path d="M771.7 507.5H784.3V519.5H771.7Z" fill="none" stroke="#fff" stroke-width="1"/><path d="M774.5 510.5H781.5V516.5H774.5Z" fill="none" stroke="#fff" stroke-width="1"/><path d="M776 512.5H780M776 514.5H780" stroke="#fff" stroke-width="0.8"/>
<path d="M809.8 507.5H822.2V519.5H809.8Z" fill="none" stroke="#fff" stroke-width="1"/><path d="M811 508H814.6V514.6H811ZM817 508H821.6V514.6H817Z" fill="#fff"/>
<rect x="840" y="512.6" width="6" height="2" fill="#fff"/><rect x="850" y="513.1" width="99.7" height="1" fill="#fff"/><rect x="898" y="507.7" width="4" height="12" fill="#fff"/>
<path d="M954.2 513.6H962M958.1 509.7V517.5" stroke="#fff" stroke-width="2"/>
<path d="M303.4 179.8L269.4 125.8" stroke="#ed1c24" stroke-width="2" fill="none"/><path d="M264 118.5L266.2 134.4L277.8 126.6Z" fill="#ed1c24"/>
<path d="M1001 219.6L764 263.4" stroke="#ed1c24" stroke-width="1.6" fill="none"/><path d="M753 266.2L766.8 256.6L768.8 270Z" fill="#ed1c24"/>
</svg>
</body></html>
